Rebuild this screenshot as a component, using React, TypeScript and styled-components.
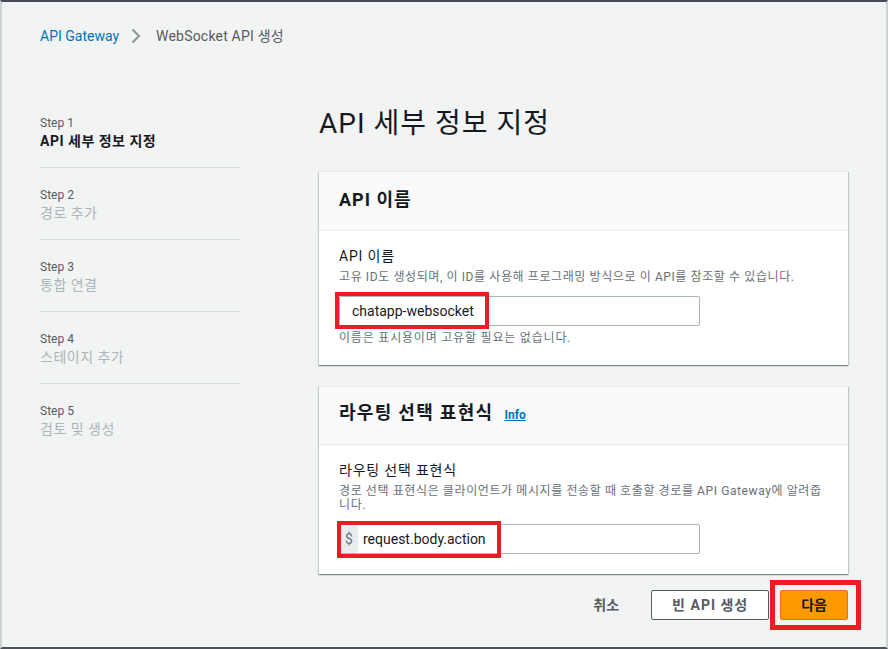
import React from "react";
import styled, { createGlobalStyle } from "styled-components";

const Global = createGlobalStyle`
  html, body { margin: 0; padding: 0; background: #f2f3f3; }
  body { font-family: Roboto, "Noto Sans CJK KR", sans-serif; color: #16191f; }
  * { box-sizing: border-box; }
`;

const Frame = styled.div`
  width: 888px;
  height: 649px;
  overflow: hidden;
  background: #f2f3f3;
  border-top: 2px solid #454c55;
  border-left: 2px solid #cdd2d3;
  border-right: 2px solid #cdd2d3;
  border-bottom: 2px solid #4b5259;
  padding: 24px 0 0 38px;
`;

const Breadcrumbs = styled.nav`
  display: flex;
  align-items: center;
  height: 20px;
  font-size: 14px;
  line-height: 20px;
`;

const Crumb = styled.span<{ $link?: boolean }>`
  color: ${(p) => (p.$link ? "#0073bb" : "#545b64")};
  letter-spacing: ${(p) => (p.$link ? 0 : 0.2)}px;
`;

const Chevron = styled.svg`
  width: 10px;
  height: 16px;
  margin: 0 15px 0 12px;
`;

const Body = styled.div`
  display: flex;
  margin-top: 60px;
`;

const StepNav = styled.ol`
  list-style: none;
  margin: 0 79px 0 0;
  padding: 9px 0 0 0;
  width: 200px;
`;

const StepItem = styled.li<{ $last?: boolean }>`
  padding-bottom: 15px;
  margin-bottom: 19px;
  border-bottom: ${(p) => (p.$last ? "none" : "1px solid #d5dbdb")};
`;

const StepLabel = styled.div`
  font-size: 12px;
  line-height: 16px;
  color: #545b64;
`;

const StepTitle = styled.div<{ $active?: boolean }>`
  font-size: 14px;
  line-height: 21px;
  letter-spacing: 0.5px;
  color: ${(p) => (p.$active ? "#16191f" : "#aab7b8")};
  font-weight: ${(p) => (p.$active ? 700 : 400)};
`;

const Main = styled.main`
  width: 529px;
`;

const PageTitle = styled.h1`
  margin: 0;
  font-size: 28px;
  line-height: 36px;
  font-weight: 400;
  letter-spacing: 1px;
  color: #16191f;
`;

const Card = styled.section<{ $gap: number }>`
  margin-top: ${(p) => p.$gap}px;
  background: #fff;
  border-top: 1px solid #eaeded;
  box-shadow: 0 1px 1px 0 rgba(0, 28, 36, 0.3), 1px 1px 1px 0 rgba(0, 28, 36, 0.15),
    -1px 1px 1px 0 rgba(0, 28, 36, 0.15);
`;

const CardHeader = styled.header<{ $tight?: boolean }>`
  display: flex;
  align-items: baseline;
  background: #fafafa;
  border-bottom: 1px solid #eaeded;
  padding: ${(p) => (p.$tight ? "14px 20px 19px" : "18px 20px 20px")};
`;

const CardTitle = styled.h2<{ $tall?: boolean }>`
  margin: 0;
  font-size: 18px;
  line-height: ${(p) => (p.$tall ? 24 : 20)}px;
  font-weight: 700;
  letter-spacing: ${(p) => (p.$tall ? 1.3 : 1)}px;
  color: #16191f;
`;

const InfoLink = styled.a`
  margin-left: 11px;
  font-size: 12px;
  font-weight: 700;
  color: #0073bb;
  text-decoration: underline;
`;

const CardBody = styled.div`
  padding: 15px 20px 20px;
`;

const Label = styled.label`
  display: block;
  font-size: 14px;
  line-height: 20px;
  letter-spacing: 0.8px;
  color: #16191f;
`;

const Description = styled.div`
  margin-top: 4px;
  font-size: 12px;
  line-height: 14px;
  letter-spacing: 0.6px;
  color: #687078;
`;

const Hint = styled.div`
  margin-top: 5px;
  font-size: 12px;
  line-height: 14px;
  letter-spacing: 0.8px;
  color: #687078;
`;

const InputBox = styled.div`
  position: relative;
  margin-top: 12px;
  width: 361px;
  height: 30px;
  display: flex;
  align-items: stretch;
  background: #fff;
  border: 1px solid #aab7b8;
  border-radius: 2px;
`;

const Prefix = styled.span`
  width: 18px;
  background: #eaeded;
  color: #687078;
  font-size: 14px;
  display: flex;
  align-items: center;
  justify-content: center;
`;

const InputText = styled.span<{ $pad: number }>`
  display: flex;
  align-items: center;
  padding-left: ${(p) => p.$pad}px;
  font-size: 14px;
  color: #16191f;
`;

const Highlight = styled.div<{ $top: number; $left: number; $w: number; $h: number; $b: number }>`
  position: absolute;
  top: ${(p) => p.$top}px;
  left: ${(p) => p.$left}px;
  width: ${(p) => p.$w}px;
  height: ${(p) => p.$h}px;
  border: ${(p) => p.$b}px solid #ed1c24;
  pointer-events: none;
`;

const Actions = styled.div`
  display: flex;
  justify-content: flex-end;
  align-items: center;
  gap: 11px;
  margin-top: 16px;
`;

const Button = styled.button<{ $variant: "link" | "normal" | "primary" }>`
  position: relative;
  height: 30px;
  padding: 4px 20px;
  font-family: inherit;
  font-size: 14px;
  line-height: 20px;
  font-weight: 700;
  letter-spacing: ${(p) => (p.$variant === "normal" ? 1 : 0)}px;
  border-radius: 2px;
  cursor: pointer;
  color: ${(p) => (p.$variant === "primary" ? "#16191f" : "#545b64")};
  background: ${(p) =>
    p.$variant === "primary" ? "#ff9900" : p.$variant === "normal" ? "#fff" : "transparent"};
  border: 1px solid
    ${(p) =>
      p.$variant === "primary" ? "#ec7211" : p.$variant === "normal" ? "#545b64" : "transparent"};
`;

const steps = [
  { label: "Step 1", title: "API 세부 정보 지정", active: true },
  { label: "Step 2", title: "경로 추가" },
  { label: "Step 3", title: "통합 연결" },
  { label: "Step 4", title: "스테이지 추가" },
  { label: "Step 5", title: "검토 및 생성" },
];

export default function App() {
  return (
    <>
      <Global />
      <Frame>
        <Breadcrumbs>
          <Crumb $link>API Gateway</Crumb>
          <Chevron viewBox="0 0 10 16" fill="none">
            <polyline points="1.5,1.5 8,8 1.5,14.5" stroke="#879596" strokeWidth="2" />
          </Chevron>
          <Crumb>WebSocket API 생성</Crumb>
        </Breadcrumbs>
        <Body>
          <StepNav>
            {steps.map((s, i) => (
              <StepItem key={s.label} $last={i === steps.length - 1}>
                <StepLabel>{s.label}</StepLabel>
                <StepTitle $active={s.active}>{s.title}</StepTitle>
              </StepItem>
            ))}
          </StepNav>
          <Main>
            <PageTitle>API 세부 정보 지정</PageTitle>
            <Card $gap={29}>
              <CardHeader>
                <CardTitle>API 이름</CardTitle>
              </CardHeader>
              <CardBody>
                <Label>API 이름</Label>
                <Description>
                  고유 ID도 생성되며, 이 ID를 사용해 프로그래밍 방식으로 이 API를 참조할 수 있습니다.
                </Description>
                <InputBox>
                  <InputText $pad={12}>chatapp-websocket</InputText>
                  <Highlight $top={-5} $left={-5} $w={154} $h={37} $b={4} />
                </InputBox>
                <Hint>이름은 표시용이며 고유할 필요는 없습니다.</Hint>
              </CardBody>
            </Card>
            <Card $gap={21}>
              <CardHeader $tight>
                <CardTitle $tall>라우팅 선택 표현식</CardTitle>
                <InfoLink>Info</InfoLink>
              </CardHeader>
              <CardBody>
                <Label>라우팅 선택 표현식</Label>
                <Description>
                  경로 선택 표현식은 클라이언트가 메시지를 전송할 때 호출할 경로를 API Gateway에 알려줍니다.
                </Description>
                <InputBox>
                  <Prefix>$</Prefix>
                  <InputText $pad={5}>request.body.action</InputText>
                  <Highlight $top={-4} $left={-3} $w={164} $h={37} $b={4} />
                </InputBox>
              </CardBody>
            </Card>
            <Actions>
              <Button $variant="link">취소</Button>
              <Button $variant="normal">빈 API 생성</Button>
              <Button $variant="primary">
                다음
                <Highlight $top={-11} $left={-11} $w={91} $h={50} $b={5} />
              </Button>
            </Actions>
          </Main>
        </Body>
      </Frame>
    </>
  );
}
